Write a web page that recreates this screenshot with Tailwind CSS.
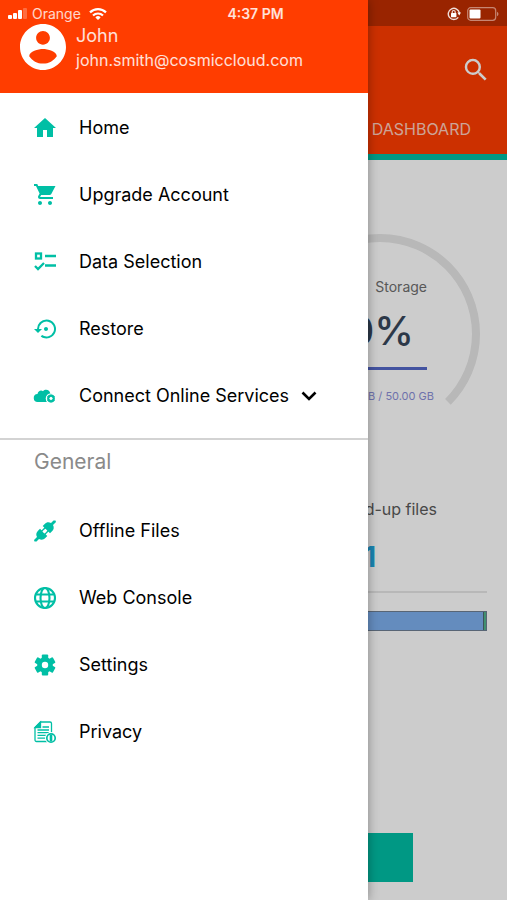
<!DOCTYPE html>
<html lang="en">
<head>
    <meta charset="UTF-8">
    <meta name="viewport" content="width=device-width, initial-scale=1.0">
    <title>Dashboard</title>
    <!-- tailwind css link -->
    <script src="https://cdn.jsdelivr.net/npm/@tailwindcss/browser@4"></script>
</head>
<body class="relative min-h-screen overflow-x-hidden bg-white font-['Inter','Liberation_Sans',sans-serif] text-black">

    <!-- status bar -->
    <div class="absolute inset-x-0 top-0 z-30 grid grid-cols-3 h-7 items-center px-2 text-white/80">
        <div class="flex items-center gap-1">
            <svg class="w-5 h-3" viewBox="0 0 20 12" fill="#fff">
                <rect x="0" y="7" width="4" height="4" rx="1"/>
                <rect x="5" y="5" width="4" height="6" rx="1"/>
                <rect x="10" y="2" width="4" height="9" rx="1"/>
                <rect x="15" y="0" width="4" height="11" rx="1" opacity=".25"/>
            </svg>
            <span class="text-sm">Orange</span>
            <svg class="w-[18px] h-3 ml-1" viewBox="0 0 18 12" fill="none" stroke="#fff" stroke-width="2.2">
                <path d="M1 4.4a11.5 11.5 0 0 1 16 0"/>
                <path d="M4 7.5a7.2 7.2 0 0 1 10 0"/>
                <path d="M9 12 6.4 9.4a3.7 3.7 0 0 1 5.2 0z" fill="#fff" stroke="none"/>
            </svg>
        </div>
        <span class="text-center text-sm font-semibold pl-1 text-white/85">4:37 PM</span>
        <div class="flex items-center justify-end gap-[6px]">
            <svg class="w-[14px] h-[14px]" viewBox="0 0 14 14" fill="none" stroke="#fff" stroke-opacity=".85">
                <path d="M11.3 10.4A5.6 5.6 0 1 1 12.4 6" stroke-width="1.4"/>
                <path d="M10.4 5.6h3.6l-1.800 2.800z" fill="#fff" stroke="none"/>
                <path d="M5.200 6.400V5a1.500 1.500 0 0 1 3 0v1.400" stroke-width="1.200"/>
                <rect x="4" y="6" width="5.400" height="4.200" rx=".5" fill="#fff" stroke="none"/>
            </svg>
            <svg class="w-8 h-[14px]" viewBox="0 0 32 14">
                <rect x=".7" y=".7" width="28" height="12.6" rx="3" fill="none" stroke="#fff" stroke-opacity=".45" stroke-width="1.2"/>
                <rect x="2.5" y="2.5" width="11" height="9" rx="1" fill="#fff"/>
                <path d="M30 4.8c2 .8 2 3.6 0 4.4z" fill="#fff" fill-opacity=".45"/>
            </svg>
        </div>
    </div>

    <!-- dashboard page -->
    <main class="min-h-screen flex flex-col">
        <header class="bg-[#ff3d00] border-b-[6px] border-[#00bfa5]">
            <div class="h-[26px] bg-[#c02e00]"></div>
            <div class="h-[87px] flex items-center justify-end pr-4">
                <button aria-label="Search">
                    <svg class="w-[30px] h-[30px]" viewBox="0 0 24 24" fill="#fff"><path d="M15.5 14h-.79l-.28-.27A6.471 6.471 0 0 0 16 9.5 6.5 6.5 0 1 0 9.5 16c1.61 0 3.09-.59 4.23-1.57l.27.28v.79l5 4.99L20.49 19l-4.99-5zm-6 0C7.01 14 5 11.99 5 9.5S7.01 5 9.5 5 14 7.01 14 9.5 11.99 14 9.5 14z"/></svg>
                </button>
            </div>
            <nav class="h-[41px] flex justify-end pr-9 pt-1">
                <a href="#" class="text-base text-white/75">DASHBOARD</a>
            </nav>
        </header>

        <section class="flex flex-col items-end pt-[74px]">
            <!-- storage gauge -->
            <div class="relative w-[200px] h-[180px] mr-[27px]">
                <svg class="w-full h-full" viewBox="0 0 200 180" fill="none">
                    <path d="M32.1 167.9A96 96 0 1 1 167.9 167.9" stroke="#e6e6e6" stroke-width="8"/>
                </svg>
                <div class="absolute inset-0 flex flex-col items-end pt-[43px] pr-[46px]">
                    <span class="text-sm leading-5 pr-[7px] text-[#6e6e6e]">Storage</span>
                    <span class="mt-[10px] text-[40px] leading-[48px] pr-5 font-medium text-[#37475a]">0%</span>
                    <div class="mt-3 w-[94px] h-[3px] mr-[7px] bg-[#5468c8]"></div>
                    <span class="mt-4 text-[11px] leading-5 text-[#8b8fd8] whitespace-nowrap">B / 50.00 GB</span>
                </div>
            </div>
            <p class="mt-[83px] pr-[70px] text-base text-[#5a5a5a]">d-up files</p>
            <p class="mt-5 pr-[131px] text-[28px] leading-8 font-bold text-[#20a5de]">1</p>
        </section>

        <section class="px-5">
            <div class="mt-[18px] border-t-2 border-[#e6e6e6]"></div>
            <div class="mt-[18px] h-5 flex border border-[#6f7f93] bg-[#7db0ee]">
                <div class="ml-auto w-[3px] bg-[#52b58c] border-l border-[#4c6a70]"></div>
            </div>
        </section>

        <button class="mt-auto mx-[94px] mb-[18px] h-[49px] bg-[#00bfa5]" aria-label="Backup"></button>
    </main>

    <div class="absolute inset-0 z-10 bg-black/20"></div>

    <!-- side menu -->
    <aside class="absolute inset-y-0 left-0 z-20 w-[368px] max-w-full bg-white shadow-[0_0_10px_rgba(0,0,0,0.35)]">
        <div class="h-[93px] bg-[#ff3d00] flex gap-[10px] pl-5 pt-6">
            <svg class="w-[46px] h-[46px]" viewBox="2 2 20 20" fill="#fff"><path d="M12 2C6.48 2 2 6.48 2 12s4.48 10 10 10 10-4.48 10-10S17.52 2 12 2zm0 3c1.66 0 3 1.34 3 3s-1.340 3-3 3-3-1.340-3-3 1.340-3 3-3zm0 14.200c-2.500 0-4.710-1.280-6-3.220.030-1.990 4-3.080 6-3.080 1.990 0 5.970 1.090 6 3.080-1.290 1.940-3.500 3.220-6 3.220z"/></svg>
            <div class="text-white/85">
                <p class="text-lg leading-6">John</p>
                <p class="text-base leading-6">john.smith@cosmiccloud.com</p>
            </div>
        </div>

        <nav class="pt-px pb-[9px] border-b-2 border-[#d3d3d3] text-lg">
            <a href="#" class="flex items-center gap-[22px] h-[67px] pl-[33px]">
                <svg class="w-6 h-6" viewBox="0 0 24 24" fill="#00bfa5"><path d="M10 21v-7h4v7h6v-9h3L12 2 1 12h3v9z"/></svg>
                Home
            </a>
            <a href="#" class="flex items-center gap-[22px] h-[67px] pl-[33px]">
                <svg class="w-6 h-6" viewBox="0 0 24 24" fill="#00bfa5"><path d="M7 18c-1.100 0-1.990.900-1.990 2S5.900 22 7 22s2-.900 2-2-.900-2-2-2zM1 1v2h2l3.600 7.590-1.350 2.450c-.160.280-.250.610-.250.960 0 1.100.900 2 2 2h13v-2H7.420c-.140 0-.250-.110-.250-.250l.030-.120.900-1.630h8.450c.750 0 1.410-.410 1.750-1.030L22.500 3H5.210l-.940-2H1zm16 17c-1.100 0-1.990.900-1.990 2s.890 2 1.990 2 2-.900 2-2-.900-2-2-2z"/></svg>
                Upgrade Account
            </a>
            <a href="#" class="flex items-center gap-[22px] h-[67px] pl-[33px]">
                <svg class="w-6 h-6" viewBox="0 0 24 24" fill="none" stroke="#00bfa5" stroke-width="2.300">
                    <rect x="3" y="3.500" width="5" height="5"/>
                    <path d="M12 6h11M12 15.500h11M2 16l3 3 6-6"/>
                </svg>
                Data Selection
            </a>
            <a href="#" class="flex items-center gap-[22px] h-[67px] pl-[33px]">
                <svg class="w-6 h-6" viewBox="0 0 24 24" fill="#00bfa5"><path d="M15 12c0-1.100-.900-2-2-2s-2 .900-2 2 .900 2 2 2 2-.900 2-2zm-1.500-9.500A9.500 9.500 0 0 0 4 12H1l4 4 4-4H6a7.500 7.500 0 1 1 3.100 6.060l-1.420 1.440A9.500 9.500 0 1 0 13.500 2.500z"/></svg>
                Restore
            </a>
            <button class="flex items-center gap-[22px] h-[67px] pl-[33px] w-full text-left">
                <svg class="w-6 h-6" viewBox="0 0 24 24">
                    <path d="M5 18a4 4 0 0 1-.5-8C5 7 8 5.500 10 7.200 12.500 4.500 17 6 17.300 9.500c1.500.300 2.700 1 3.200 2.500L14 18z" fill="#00bfa5"/>
                    <circle cx="18" cy="14.500" r="5.300" fill="#fff"/>
                    <circle cx="18" cy="14.500" r="2.800" fill="none" stroke="#00bfa5" stroke-width="2.200"/>
                    <path d="M18 10.500v8M14.500 12.500l7 4M14.500 16.500l7-4" stroke="#00bfa5" stroke-width="1"/>
                    <circle cx="18" cy="14.500" r="1.400" fill="#fff"/>
                </svg>
                <span class="flex items-center gap-3">
                    Connect Online Services
                    <svg class="w-4 h-4" viewBox="0 0 16 16" fill="none" stroke="#000" stroke-width="2.600"><path d="M1.500 4.500 8 11l6.500-6.500"/></svg>
                </span>
            </button>
        </nav>

        <h2 class="h-14 pl-[34px] pt-2 text-[21px] leading-7 text-[#8a8a8a]">General</h2>

        <nav class="pt-px text-lg">
            <a href="#" class="flex items-center gap-[22px] h-[67px] pl-[33px]">
                <svg class="w-6 h-6" viewBox="0 0 24 24" fill="#00bfa5">
                    <path d="M1.500 22.500 1 21l3-3c-1.300-2.500-.800-4.500 1-6.300l2-2 7.300 7.300-2 2c-1.800 1.800-3.800 2.300-6.300 1l-2.500 2.500z"/>
                    <path d="M22.500 1.500 23 3l-3 3c1.300 2.500.800 4.500-1 6.300l-2 2L9.700 7l2-2c1.800-1.800 3.800-2.300 6.300-1l2.500-2.500z"/>
                    <path d="M8.500 12.500l4-4M11.500 15.500l4-4" stroke="#00bfa5" stroke-width="1.600"/>
                    <path d="M10.500 11.500l2 2" stroke="#fff" stroke-width="3"/>
                </svg>
                Offline Files
            </a>
            <a href="#" class="flex items-center gap-[22px] h-[67px] pl-[33px]">
                <svg class="w-6 h-6" viewBox="0 0 24 24" fill="none" stroke="#00bfa5" stroke-width="2.100">
                    <circle cx="12" cy="12" r="10"/>
                    <ellipse cx="12" cy="12" rx="4.500" ry="10"/>
                    <path d="M3 8.500h18M3 15.500h18"/>
                </svg>
                Web Console
            </a>
            <a href="#" class="flex items-center gap-[22px] h-[67px] pl-[33px]">
                <svg class="w-6 h-6" viewBox="0 0 24 24">
                    <g fill="#00bfa5">
                        <circle cx="12" cy="12" r="7.800"/>
                        <rect x="8.800" y="1.500" width="6.400" height="21" rx="1"/>
                        <rect x="8.800" y="1.500" width="6.400" height="21" rx="1" transform="rotate(60 12 12)"/>
                        <rect x="8.800" y="1.500" width="6.400" height="21" rx="1" transform="rotate(120 12 12)"/>
                    </g>
                    <circle cx="12" cy="12" r="3.200" fill="#fff"/>
                </svg>
                Settings
            </a>
            <a href="#" class="flex items-center gap-[22px] h-[67px] pl-[33px]">
                <svg class="w-6 h-6" viewBox="0 0 24 24" fill="none" stroke="#00bfa5" stroke-width="1.300">
                    <path d="M7.500 2H17a1.500 1.500 0 0 1 1.500 1.500V21.500H3.500A1.500 1.500 0 0 1 2 20V7.500z"/>
                    <path d="M7.500 2v5.500H2z" fill="#00bfa5"/>
                    <path d="M9.500 7H16M4.500 10H16M4.500 12.700H16M4.500 15.400H13M4.500 18.200h8"/>
                    <circle cx="18" cy="18" r="6" fill="#fff" stroke="none"/>
                    <circle cx="18" cy="18" r="4.200" stroke-width="1.700"/>
                    <path d="M18 14.800v6.400" stroke-width="2.600"/>
                </svg>
                Privacy
            </a>
        </nav>
    </aside>

</body>
</html>
